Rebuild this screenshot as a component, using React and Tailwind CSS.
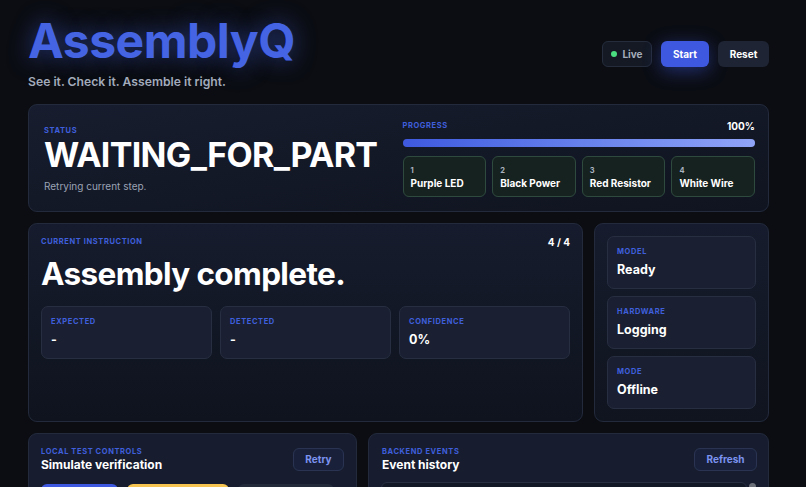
import React from "react";

const steps = [
  { n: 1, name: "Purple LED" },
  { n: 2, name: "Black Power" },
  { n: 3, name: "Red Resistor" },
  { n: 4, name: "White Wire" },
];

const readouts = [
  { label: "Expected", value: "-" },
  { label: "Detected", value: "-" },
  { label: "Confidence", value: "0%" },
];

const systems = [
  { label: "Model", value: "Ready" },
  { label: "Hardware", value: "Logging" },
  { label: "Mode", value: "Offline" },
];

function Label({ children, className = "" }) {
  return (
    <p className={`text-[7.5px] leading-[12px] font-bold uppercase tracking-[0.08em] text-[#3f5fdc] ${className}`}>
      {children}
    </p>
  );
}

function Tile({ label, value }) {
  return (
    <div className="h-[53px] rounded-[7px] border border-[#272e41] bg-[#1a2031] px-[9px] pt-[9px]">
      <Label>{label}</Label>
      <p className="mt-[2px] text-[12.5px] leading-[20px] font-bold text-white">{value}</p>
    </div>
  );
}

export default function App() {
  return (
    <div className="min-h-screen bg-[#0b0d13] font-['Inter','Noto_Sans',sans-serif] text-white">
      <div className="w-[741px] ml-[28px] pt-[17px] pb-10">
        {/* header */}
        <header className="flex items-start justify-between">
          <div>
            <h1 className="text-[48px] leading-none font-bold tracking-[-0.01em] text-[#4464e4] [text-shadow:0_0_22px_rgba(68,100,228,0.55)]">
              AssemblyQ
            </h1>
            <p className="mt-[9px] text-[12.2px] leading-[16px] font-semibold text-[#a3abbb]">
              See it. Check it. Assemble it right.
            </p>
          </div>
          <div className="mt-[24px] flex items-center gap-[9px]">
            <div className="flex h-[26px] w-[50px] items-center justify-center gap-[5px] rounded-[6px] border border-[#252c3b] bg-[#141924] text-[10px] font-bold text-[#a4acba]">
              <span className="h-[6px] w-[6px] rounded-full bg-[#4ade80]" />
              Live
            </div>
            <button className="h-[26px] w-[48px] rounded-[6px] bg-[#3e58e0] text-[10px] font-bold text-white shadow-[0_4px_18px_rgba(62,88,224,0.45)]">
              Start
            </button>
            <button className="h-[26px] w-[51px] rounded-[6px] bg-[#1e2433] text-[10px] font-bold text-white">
              Reset
            </button>
          </div>
        </header>

        {/* status */}
        <section className="mt-[14px] grid grid-cols-2 gap-2 rounded-[9px] border border-[#232a3c] bg-gradient-to-br from-[#171d2e] to-[#101420] px-[13px] pt-[13px] pb-[14px]">
          <div className="pt-[7px] pl-[2px]">
            <Label>Status</Label>
            <h2 className="mt-[1px] text-[34px] leading-none font-bold tracking-[-0.02em] text-white">
              WAITING_FOR_PART
            </h2>
            <p className="mt-[7px] text-[10px] leading-[14px] text-[#9ba3b4]">Retrying current step.</p>
          </div>
          <div>
            <div className="flex h-[16px] items-center justify-between">
              <Label>Progress</Label>
              <span className="text-[10px] font-bold text-white">100%</span>
            </div>
            <div className="mt-[5px] h-[8px] rounded-full bg-[#1d2436]">
              <div className="h-full rounded-full bg-gradient-to-r from-[#3f59df] to-[#90a4f7]" style={{ width: "100%" }} />
            </div>
            <div className="mt-[9px] grid grid-cols-4 gap-[6px]">
              {steps.map((s) => (
                <div key={s.n} className="h-[41px] rounded-[6px] border border-[#2e4a3e] bg-[#16221f] px-[7px] pt-[9px]">
                  <p className="text-[7.5px] leading-[10px] font-bold text-[#a9b2bf]">{s.n}</p>
                  <p className="text-[10px] leading-[14px] font-bold text-white">{s.name}</p>
                </div>
              ))}
            </div>
          </div>
        </section>

        {/* instruction + system */}
        <div className="mt-[11px] grid grid-cols-[555px_1fr] gap-[11px]">
          <section className="rounded-[9px] border border-[#232a3c] bg-gradient-to-b from-[#161c2d] to-[#0f131e] px-[12px] pt-[12px]">
            <div className="flex items-center justify-between">
              <Label>Current Instruction</Label>
              <span className="text-[10px] leading-[12px] font-bold text-white">4 / 4</span>
            </div>
            <h2 className="mt-[10px] text-[31.5px] leading-none font-bold tracking-[-0.02em] text-white">
              Assembly complete.
            </h2>
            <div className="mt-[16px] grid grid-cols-3 gap-2">
              {readouts.map((r) => (
                <Tile key={r.label} {...r} />
              ))}
            </div>
          </section>
          <section className="flex flex-col gap-[7px] rounded-[9px] border border-[#232a3c] bg-gradient-to-b from-[#161c2d] to-[#10141f] p-[12px]">
            {systems.map((s) => (
              <Tile key={s.label} {...s} />
            ))}
          </section>
        </div>

        {/* bottom */}
        <div className="mt-[11px] grid grid-cols-[329px_1fr] gap-[11px]">
          <section className="rounded-[9px] border border-[#232a3c] bg-[#171d2f] p-[12px]">
            <div className="flex items-center justify-between">
              <div>
                <p className="text-[7.5px] leading-[11px] font-bold uppercase tracking-[0.08em] text-[#3f5fdc]">Local Test Controls</p>
                <p className="text-[12px] leading-[16px] font-bold text-white">Simulate verification</p>
              </div>
              <button className="h-[23px] w-[51px] rounded-[6px] border border-[#2a3452] bg-[#19213a] text-[10px] font-bold text-[#7c93f0]">
                Retry
              </button>
            </div>
            <div className="mt-[11px] flex gap-[9px]">
              <button aria-label="Pass" className="h-[30px] w-[77px] rounded-[6px] bg-[#3e58e0]" />
              <button aria-label="Wrong part" className="h-[30px] w-[102px] rounded-[6px] bg-[#f5c451]" />
              <button aria-label="No part" className="h-[30px] w-[96px] rounded-[6px] bg-[#232a3a]" />
            </div>
          </section>
          <section className="rounded-[9px] border border-[#232a3c] bg-[#171d2f] p-[12px] pr-[11px]">
            <div className="flex items-center justify-between">
              <div className="pl-[1px]">
                <p className="text-[7.5px] leading-[11px] font-bold uppercase tracking-[0.08em] text-[#3f5fdc]">Backend Events</p>
                <p className="text-[12px] leading-[16px] font-bold text-white">Event history</p>
              </div>
              <button className="h-[23px] w-[63px] rounded-[6px] border border-[#2a3452] bg-[#19213a] text-[10px] font-bold text-[#7c93f0]">
                Refresh
              </button>
            </div>
            <div className="mt-[9px] flex gap-[2px]">
              <div className="h-[60px] flex-1 rounded-[6px] border border-[#272e41] bg-[#131827]" />
              <div className="w-[8px] pt-[1px]">
                <div className="h-[24px] w-[7px] rounded-full bg-[#6b6f78]" />
              </div>
            </div>
          </section>
        </div>
      </div>
    </div>
  );
}
